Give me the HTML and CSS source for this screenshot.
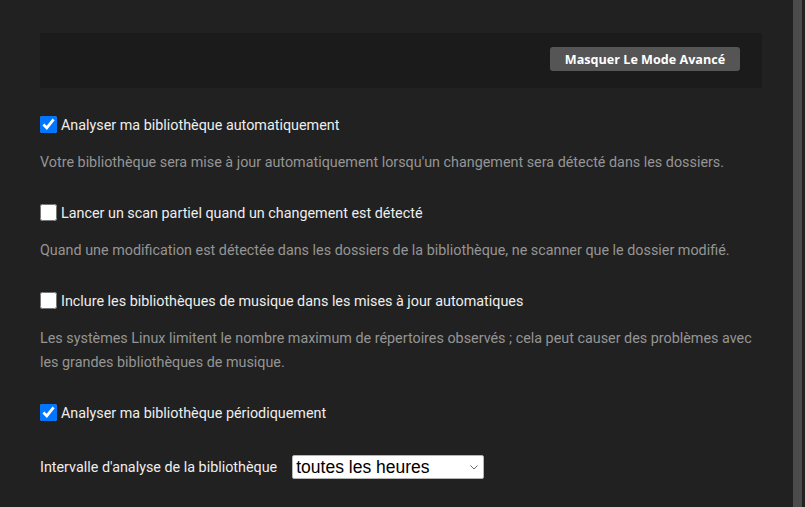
FILE: index.html
```html
<!DOCTYPE html>
<html lang="fr">
<head>
<meta charset="utf-8">
<title>Bibliothèque</title>
<link rel="stylesheet" href="styles.css">
</head>
<body>
<div class="page">
  <main class="content">
    <div class="toolbar">
      <button class="adv-btn" type="button">Masquer Le Mode Avancé</button>
    </div>

    <div class="setting">
      <label class="check-row"><input type="checkbox" checked><span>Analyser ma bibliothèque automatiquement</span></label>
      <p class="help">Votre bibliothèque sera mise à jour automatiquement lorsqu'un changement sera détecté dans les dossiers.</p>
    </div>

    <div class="setting">
      <label class="check-row"><input type="checkbox"><span>Lancer un scan partiel quand un changement est détecté</span></label>
      <p class="help">Quand une modification est détectée dans les dossiers de la bibliothèque, ne scanner que le dossier modifié.</p>
    </div>

    <div class="setting">
      <label class="check-row"><input type="checkbox"><span>Inclure les bibliothèques de musique dans les mises à jour automatiques</span></label>
      <p class="help">Les systèmes Linux limitent le nombre maximum de répertoires observés ; cela peut causer des problèmes avec les grandes bibliothèques de musique.</p>
    </div>

    <div class="setting">
      <label class="check-row"><input type="checkbox" checked><span>Analyser ma bibliothèque périodiquement</span></label>
    </div>

    <div class="select-row">
      <label for="interval">Intervalle d'analyse de la bibliothèque</label>
      <div class="select-wrap">
        <select id="interval">
          <option>toutes les heures</option>
        </select>
        <svg class="chevron" width="8" height="5" viewBox="0 0 8 5" aria-hidden="true"><path d="M0.5 0.5 L4 4 L7.5 0.5" fill="none" stroke="#6a6a6a" stroke-width="1"/></svg>
      </div>
    </div>
  </main>
  <div class="scrolltrack"><div class="thumb"></div></div>
</div>
</body>
</html>
```

FILE: styles.css
```css
html, body {
  margin: 0;
  padding: 0;
  height: 100%;
  overflow: hidden;
}

body {
  background: #212121;
  color: #eeeeee;
  font-family: Roboto, "Noto Sans", Arial, sans-serif;
  font-size: 14.35px;
}

.page {
  display: flex;
  height: 507px;
}

.content {
  flex: 1;
  padding: 33px 31px 0 40px;
}

.toolbar {
  background: #1b1b1b;
  height: 55px;
  display: flex;
  align-items: center;
  justify-content: flex-end;
  padding-right: 22px;
  margin-bottom: 28px;
}

.adv-btn {
  background: #555555;
  color: #ffffff;
  border: none;
  border-radius: 3px;
  height: 24px;
  width: 190px;
  margin-top: -3px;
  font-family: "Open Sans", Arial, sans-serif;
  font-weight: 700;
  font-size: 12.6px;
  padding: 0;
}

.setting {
  margin-bottom: 29px;
}

.check-row {
  display: flex;
  align-items: center;
  height: 20px;
  line-height: 20px;
  color: #eeeeee;
}

.check-row input {
  width: 17px;
  height: 17px;
  margin: -3px 4px 0 0;
}

.help {
  margin: 15px 0 0 0;
  line-height: 24px;
  color: #959595;
  padding-right: 10px;
}

.select-row {
  display: flex;
  align-items: center;
  margin-top: 31px;
}

.select-row label {
  margin-right: 15px;
  color: #eeeeee;
}

.select-wrap {
  position: relative;
  display: flex;
}

.select-wrap select {
  appearance: none;
  -webkit-appearance: none;
  width: 192px;
  height: 24px;
  font-family: "Liberation Sans", Arial, sans-serif;
  font-size: 17.5px;
  background: #ffffff;
  color: #000000;
  border: 1px solid #b5b5b5;
  border-radius: 2px;
  padding: 0 3px;
}

.chevron {
  position: absolute;
  right: 6px;
  top: 10px;
  pointer-events: none;
}

.scrolltrack {
  width: 12px;
  background: #222222;
  display: flex;
}

.thumb {
  width: 9px;
  background: #4b4b4b;
}
```
